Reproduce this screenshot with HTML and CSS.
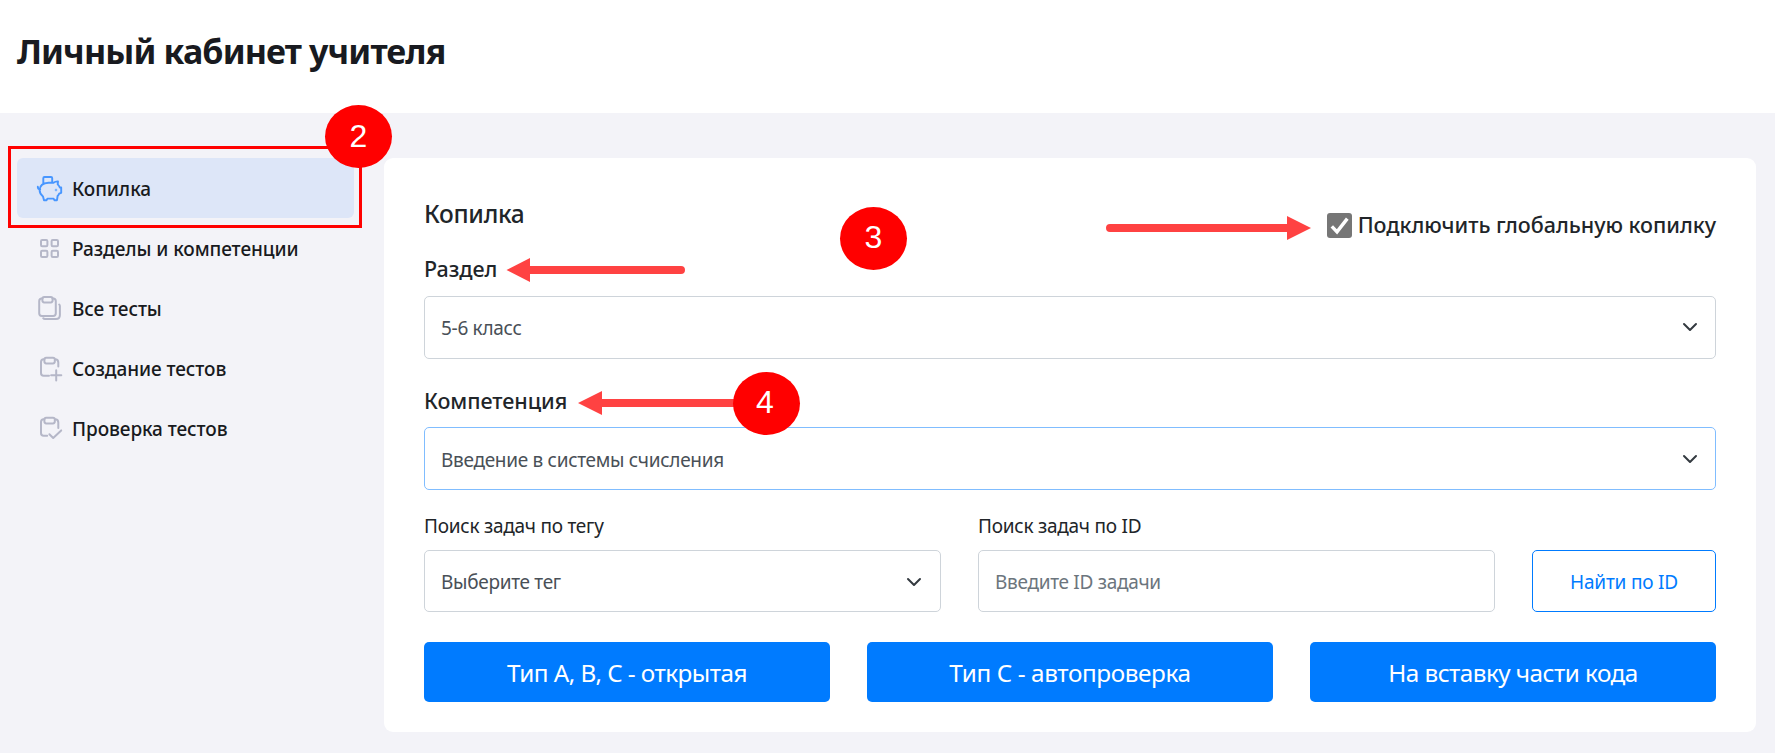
FILE: index.html
```html
<!DOCTYPE html>
<html lang="ru">
<head>
<meta charset="utf-8">
<title>Личный кабинет учителя</title>
<link rel="stylesheet" href="styles.css">
</head>
<body>
<header class="header"><h1 class="title">Личный кабинет учителя</h1></header>
<div class="layout">
  <nav class="nav">
    <a class="nav-item active">
      <svg class="icon" viewBox="0 0 28 28"><path d="M7.3 9.6V4.2Q7.3 3 8.5 3H15Q16.2 3 16.2 4.2V8.6M1.8 12.8Q2 15.3 4.2 15.2M12.5 8.8H17.5Q19.5 7.2 22 7.4L21.7 10.4Q23.2 11.8 23.8 13.5H25.2V18.8L23.2 19.6Q22.5 21.2 21.6 22L21 26.2H18.4L17.6 24.6H11.4L10.6 26.2H8L7 22.4Q3.6 19.8 3.6 16Q4 9.2 12.5 8.8"/><circle cx="20" cy="16" r=".3"/></svg>
      <span>Копилка</span></a>
    <a class="nav-item">
      <svg class="icon" viewBox="0 0 28 28"><rect x="5" y="6" width="6.4" height="6.2" rx="1.2"/><rect x="15.6" y="6" width="6.4" height="6.2" rx="1.2"/><rect x="5" y="16.8" width="6.4" height="6.2" rx="1.2"/><rect x="15.6" y="16.8" width="6.4" height="6.2" rx="1.2"/></svg>
      <span>Разделы и компетенции</span></a>
    <a class="nav-item">
      <svg class="icon" viewBox="0 0 28 28"><path d="M6.5 4.5H5.8Q3.2 4.5 3.2 7.2V19.2Q3.2 21.9 5.8 21.9H17.2Q19.8 21.9 19.8 19.2V7.2Q19.8 4.5 17.2 4.5H16.5M23.2 10.5Q23.9 11 23.9 12V21Q23.9 25 20 25H9Q7.8 25 7.2 24.2"/><rect x="6.4" y="3" width="10.2" height="5.4" rx="1.8"/></svg>
      <span>Все тесты</span></a>
    <a class="nav-item">
      <svg class="icon" viewBox="0 0 28 28"><path d="M8.4 5.2H7.6Q5 5.2 5 8V19Q5 21.8 7.6 21.8H13M19 5.2Q22.3 5.2 22.3 8.5V12.5M20.2 16.2V26.4M15.1 21.3H25.3"/><rect x="8.4" y="3.8" width="10.4" height="5.6" rx="1.8"/></svg>
      <span>Создание тестов</span></a>
    <a class="nav-item">
      <svg class="icon" viewBox="0 0 28 28"><path d="M8.4 5.2H7.6Q5 5.2 5 8V19Q5 21.8 7.6 21.8H11.2M19 5.2Q22.3 5.2 22.3 8.5V14M13.4 20.2L17.2 24L25.2 16.4"/><rect x="8.4" y="3.8" width="10.4" height="5.6" rx="1.8"/></svg>
      <span>Проверка тестов</span></a>
  </nav>
  <main class="card">
    <div class="card-head">
      <h2 class="heading">Копилка</h2>
      <label class="global"><span class="checkbox"><svg viewBox="0 0 25 25"><path d="M4.8 13.3L10 18.8L20.3 5.6"/></svg></span><span class="global-text">Подключить глобальную копилку</span></label>
    </div>
    <div class="label-strong">Раздел</div>
    <div class="control"><span>5-6 класс</span><svg class="chevron" viewBox="0 0 16 10"><path d="M2 2L8 8L14 2"/></svg></div>
    <div class="label-strong second">Компетенция</div>
    <div class="control focused"><span>Введение в системы счисления</span><svg class="chevron" viewBox="0 0 16 10"><path d="M2 2L8 8L14 2"/></svg></div>
    <div class="search">
      <div>
        <div class="label">Поиск задач по тегу</div>
        <div class="control small"><span>Выберите тег</span><svg class="chevron" viewBox="0 0 16 10"><path d="M2 2L8 8L14 2"/></svg></div>
      </div>
      <div>
        <div class="label">Поиск задач по ID</div>
        <div class="control small placeholder"><span>Введите ID задачи</span></div>
      </div>
      <button class="find">Найти по ID</button>
    </div>
    <div class="types">
      <button class="type">Тип A, B, C - открытая</button>
      <button class="type wide">Тип C - автопроверка</button>
      <button class="type">На вставку части кода</button>
    </div>
  </main>
</div>
<div class="frame"></div>
<svg class="arrows" viewBox="0 0 1775 753">
  <path class="shaft" d="M528 270H681M600 403H760M1110 228H1290"/>
  <path class="tip" d="M506.500 270L530 258V282ZM578 403L602 391V415ZM1311 228L1287 216V240Z"/>
</svg>
<div class="badge two">2</div>
<div class="badge three">3</div>
<div class="badge four">4</div>
</body>
</html>
```
FILE: styles.css
```css
* { box-sizing: border-box; }
body { margin: 0; width: 1775px; height: 753px; overflow: hidden; position: relative; background: #f3f3f8; color: #212529; font-family: "Noto Sans", "Open Sans", sans-serif; font-size: 19px; letter-spacing: -.3px; }
h1, h2 { margin: 0; }
.header { height: 113px; padding: 26px 17px; background: #fff; }
.title { font-size: 34px; line-height: 50px; font-weight: 700; letter-spacing: -.87px; color: #181a20; }
.layout { display: grid; grid-template-columns: 337px 1372px; column-gap: 30px; padding: 45px 0 0 17px; align-items: start; }
.nav-item { display: flex; align-items: center; gap: 8px; height: 60px; padding-left: 19px; border-radius: 6px; font-weight: 500; letter-spacing: -.08px; color: #181a20; }
.nav-item span { padding-top: 2px; }
.nav-item.active { background: #dde6f8; }
.icon { width: 28px; height: 28px; flex: none; fill: none; stroke: #b5b7c8; stroke-width: 2; stroke-linecap: round; stroke-linejoin: round; }
.active .icon { stroke: #4796ff; stroke-width: 1.9; }
.card { height: 574px; padding: 36px 40px 30px; background: #fff; border-radius: 9px; }
.card-head { display: flex; justify-content: space-between; height: 59px; }
.heading { padding-top: 1px; font-size: 24.5px; line-height: 38px; font-weight: 500; letter-spacing: -.3px; }
.global { display: flex; align-items: center; gap: 6px; height: 62px; font-size: 21.5px; font-weight: 500; letter-spacing: 0; }
.global-text { padding-bottom: 2px; letter-spacing: -.02px; }
.checkbox { width: 25px; height: 25px; border-radius: 3px; background: #767676; }
.checkbox svg { display: block; fill: none; stroke: #fff; stroke-width: 3.4; }
.label-strong { height: 43px; font-size: 21.5px; line-height: 32px; font-weight: 500; letter-spacing: -.05px; }
.label-strong.second { height: 42px; margin-top: 26px; }
.control { display: flex; align-items: center; justify-content: space-between; height: 63px; padding: 0 17px 0 16px; border: 1px solid #ced4da; border-radius: 5px; color: #495057; }
.control.focused { padding-top: 2px; border-color: #80bdff; }
.control.small { height: 62px; padding-top: 2px; }
.small .chevron { margin-right: 1px; }
.placeholder { color: #6c757d; }
.chevron { width: 16px; height: 10px; margin-bottom: 1px; fill: none; stroke: #343a40; stroke-width: 2; stroke-linecap: round; stroke-linejoin: round; }
.search { display: grid; grid-template-columns: 517px 517px 184px; column-gap: 37px; margin-top: 22px; align-items: end; }
.label { height: 38px; line-height: 28px; letter-spacing: -.25px; }
button { font-family: inherit; padding: 0; border-radius: 5px; }
.find { height: 62px; padding-top: 2px; font-size: 19px; letter-spacing: -.2px; background: #fff; border: 1px solid #007bff; color: #007bff; }
.types { display: grid; grid-template-columns: repeat(3, 1fr); column-gap: 37px; margin-top: 30px; }
.type { height: 60px; border: 0; background: #007bff; color: #fff; font-size: 24.3px; letter-spacing: -.55px; }
.type.wide { letter-spacing: -.38px; }
.frame { position: absolute; left: 8px; top: 146px; width: 354px; height: 82px; border: 3px solid #f00; }
.arrows { position: absolute; left: 0; top: 0; width: 1775px; height: 753px; }
.shaft { stroke: #ff4242; stroke-width: 8; stroke-linecap: round; fill: none; }
.tip { fill: #ff4242; }
.badge { position: absolute; width: 67px; height: 63px; border-radius: 50%; background: #f00; color: #fff; font: 32px/63px "Liberation Sans", Arial, sans-serif; letter-spacing: 0; text-align: center; }
.two { left: 325px; top: 105px; }
.three { left: 840px; top: 207px; line-height: 61px; }
.four { left: 733px; top: 372px; line-height: 61px; padding-right: 3px; }
```
